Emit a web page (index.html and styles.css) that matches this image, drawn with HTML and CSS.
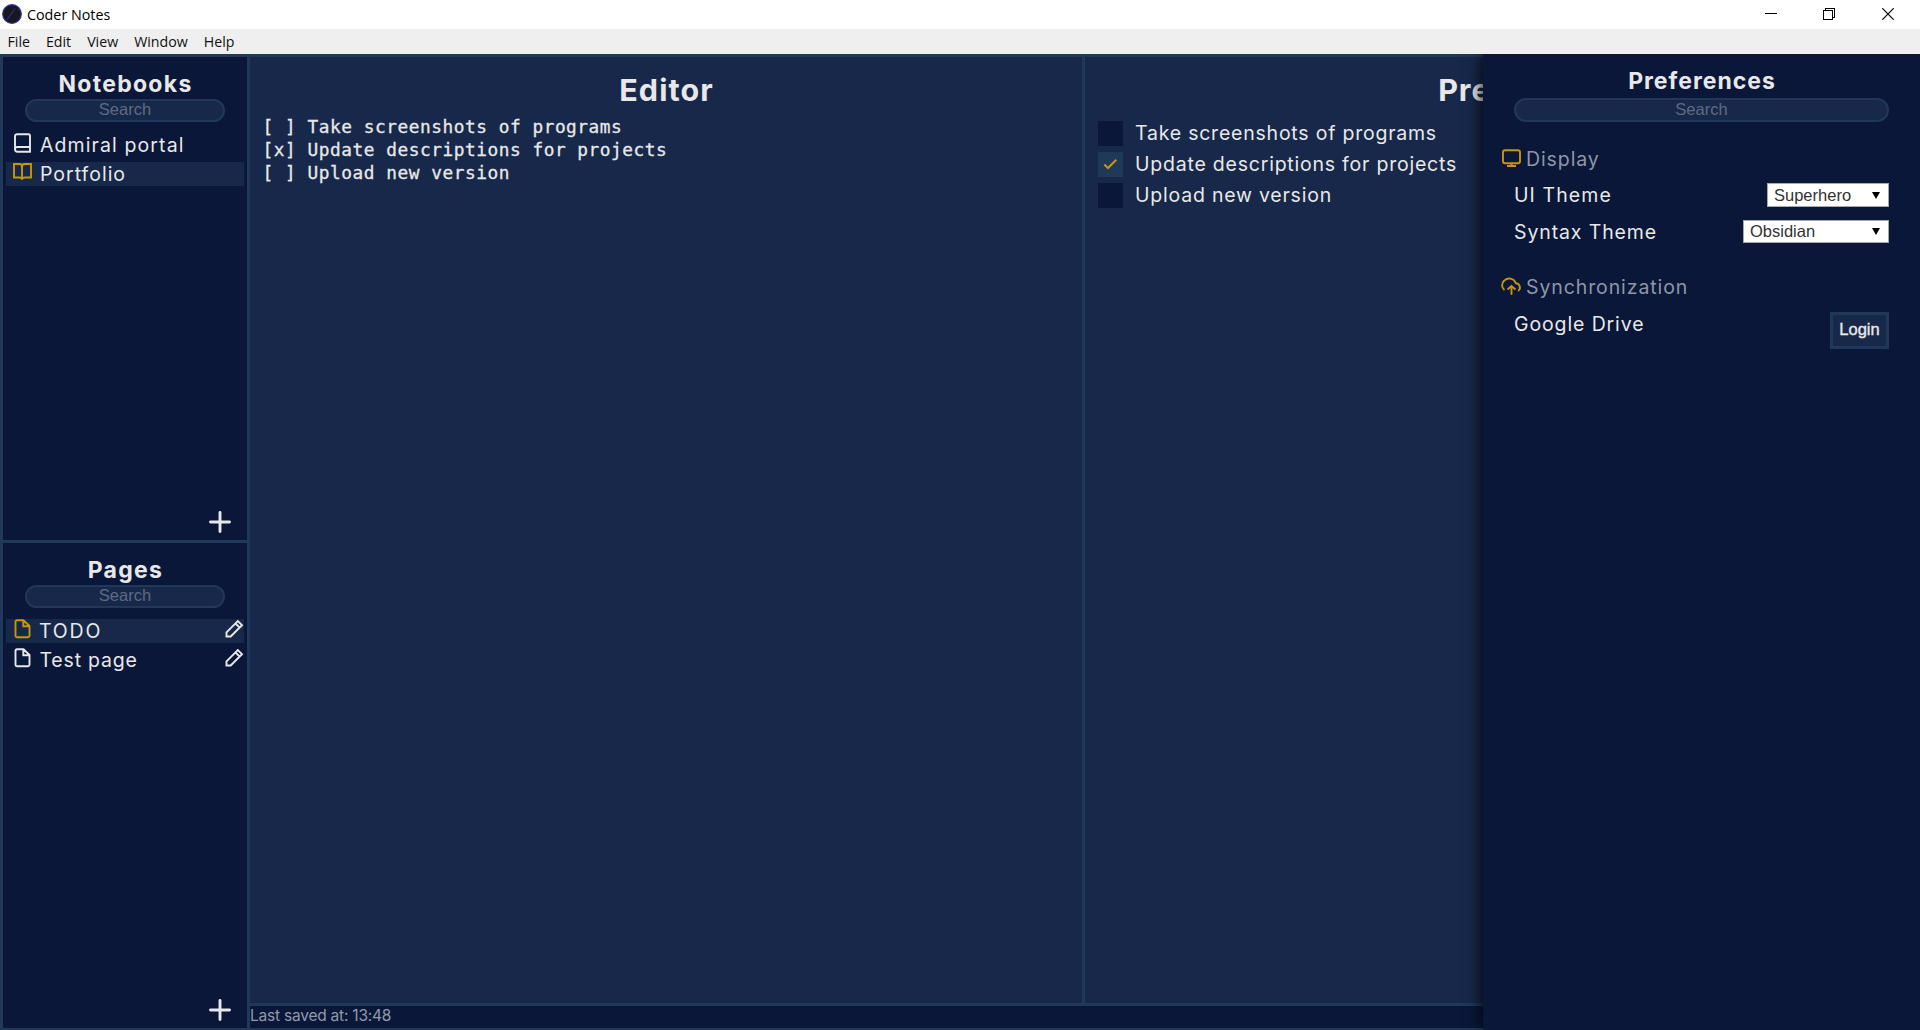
FILE: index.html
```html
<!DOCTYPE html>
<html lang="en">
<head>
<meta charset="utf-8">
<title>Coder Notes</title>
<link rel="stylesheet" href="styles.css">
</head>
<body>
<header class="titlebar">
  <svg class="logo" viewBox="0 0 20 20"><circle cx="10" cy="10" r="9.3" fill="#17171c" stroke="#3230a8" stroke-width="1.2"/><path d="M5.3 15.5 13 4.500M15.500 5.200l2 .800" stroke="#3633b4" stroke-width="1" fill="none"/></svg>
  <span class="app-name">Coder Notes</span>
  <div class="window-controls">
    <svg viewBox="0 0 12 12"><path d="M0 5.500h12" /></svg>
    <svg viewBox="0 0 12 12"><path d="M.5 2.500h9v9h-9zM2.500 2.500v-2h9v9h-2"/></svg>
    <svg class="close" viewBox="0 0 12 12"><path d="M.3.300l11.400 11.400M11.700.300.300 11.700"/></svg>
  </div>
</header>
<nav class="menubar"><span>File</span><span>Edit</span><span>View</span><span>Window</span><span>Help</span></nav>
<main class="app">
  <aside class="sidebar">
    <section class="panel">
      <h2 class="h-notebooks">Notebooks</h2>
      <div class="search">Search</div>
      <ul class="list">
        <li><svg class="icon" viewBox="0 0 20 20"><path d="M5 1.200h11.500a1.500 1.500 0 0 1 1.500 1.500V18.700H5.500A2.500 2.500 0 0 1 3 16.200V3.200A2 2 0 0 1 5 1.200zM3 16.300A2.300 2.300 0 0 1 5.500 14H18"/></svg><span class="l-admiral">Admiral portal</span></li>
        <li class="active"><svg class="icon" viewBox="0 0 20 20"><path d="M2 2h5.500q2.500 0 2.500 2.500Q10 2 12.500 2H19v13.500h-6.500q-2 0-2.500 2-.5-2-2.500-2H2zM10 4v13"/></svg><span class="l-portfolio">Portfolio</span></li>
      </ul>
      <svg class="add" viewBox="0 0 22 22"><path d="M11 1.500v19M1.500 11h19"/></svg>
    </section>
    <section class="panel">
      <h2 class="h-pages">Pages</h2>
      <div class="search">Search</div>
      <ul class="list">
        <li class="active"><svg class="icon" viewBox="0 0 20 20"><path d="M5 1.300h6.500L17.500 7v9.500a1.500 1.500 0 0 1-1.500 1.700H5a1.500 1.500 0 0 1-1.500-1.500V2.800Q3.500 1.300 5 1.300zM11.300 1.500V7.300H17.500"/></svg><span class="l-todo">TODO</span><svg class="pencil" viewBox="0 0 20 20"><path d="M2.500 17.500v-4.200L13.800 2l4.200 4.200L6.700 17.500zM11.500 4.500l4.200 4.200"/></svg></li>
        <li><svg class="icon" viewBox="0 0 20 20"><path d="M5 1.300h6.500L17.500 7v9.500a1.500 1.500 0 0 1-1.500 1.700H5a1.500 1.500 0 0 1-1.500-1.500V2.800Q3.500 1.300 5 1.300zM11.300 1.500V7.300H17.500"/></svg><span class="l-test">Test page</span><svg class="pencil" viewBox="0 0 20 20"><path d="M2.500 17.500v-4.200L13.800 2l4.200 4.200L6.700 17.500zM11.500 4.500l4.200 4.200"/></svg></li>
      </ul>
      <svg class="add" viewBox="0 0 22 22"><path d="M11 1.500v19M1.500 11h19"/></svg>
    </section>
  </aside>
  <div class="workspace">
    <section class="editor">
      <h1 class="h-editor">Editor</h1>
      <pre class="source">[ ] Take screenshots of programs
[x] Update descriptions for projects
[ ] Upload new version</pre>
    </section>
    <section class="preview">
      <h1 class="h-preview">Preview</h1>
      <ul class="tasks">
        <li><i class="box"></i><span>Take screenshots of programs</span></li>
        <li><i class="box checked"><svg viewBox="0 0 25 25"><path d="M6.300 12.500l3.700 3.500 8.300-8.300"/></svg></i><span>Update descriptions for projects</span></li>
        <li><i class="box"></i><span>Upload new version</span></li>
      </ul>
    </section>
    <footer class="status">Last saved at: 13:48</footer>
  </div>
  <aside class="drawer">
    <h2 class="h-prefs">Preferences</h2>
    <div class="search">Search</div>
    <h3><svg class="icon" viewBox="0 0 20 20"><rect x="2" y="2.200" width="17" height="13" rx="2"/><path d="M10.500 15.200V17.500M6 18h9"/></svg><span>Display</span></h3>
    <div class="setting"><span class="p-ui">UI Theme</span><div class="select select-ui"><span>Superhero</span><b></b></div></div>
    <div class="setting second"><span>Syntax Theme</span><div class="select select-syntax"><span>Obsidian</span><b></b></div></div>
    <h3 class="sync"><svg class="icon" viewBox="0 0 20 20"><path d="M3.500 14A6 6 0 0 1 3 4.800 7 7 0 0 1 14.800 7.200 4.200 4.200 0 0 1 17 14.900M10.500 18.800V10.500M6.500 13.500 10.500 10l4 3.500"/></svg><span>Synchronization</span></h3>
    <div class="setting drive"><span>Google Drive</span><button class="login">Login</button></div>
  </aside>
</main>
</body>
</html>
```
FILE: styles.css
```css
* { box-sizing: border-box; margin: 0; padding: 0; }
:root { --dark: #0a1739; --mid: #17284a; --line: #203859; --text: #e8e8e8; --gold: #c7960c; }
body { width: 1920px; height: 1030px; overflow: hidden; display: flex; flex-direction: column; background: var(--dark); color: var(--text); font-family: Inter, sans-serif; }
ul { list-style: none; }
svg { fill: none; stroke: currentColor; display: block; flex: none; }

.titlebar { height: 29px; flex: none; display: flex; align-items: center; background: #fff; color: #000; padding: 0 26px 1px 2px; font: 14.3px "Open Sans", sans-serif; }
.logo { width: 20px; height: 20px; margin-right: 5px; }
.window-controls { margin-left: auto; display: flex; gap: 47px; }
.window-controls svg { width: 12px; height: 12px; stroke-width: 1; shape-rendering: crispEdges; }
.window-controls svg:first-child { margin-right: -1px; }
.window-controls .close { shape-rendering: auto; stroke-width: 1.200; }
.menubar { height: 25px; flex: none; display: flex; align-items: center; background: #efefef; color: #111; padding-left: 7.500px; gap: 16px; font: 14.2px "Open Sans", sans-serif; }

.app { position: relative; flex: 1; min-height: 0; overflow: hidden; display: grid; grid-template-columns: 244px 1fr; gap: 3px; padding: 3px 3px 2px; background: var(--line); }
.sidebar { display: grid; grid-template-rows: 483px 485px; gap: 3px; }
.panel { background: var(--dark); display: flex; flex-direction: column; padding: 12px 3px 7px; }
h2 { font-size: 23px; line-height: 30px; font-weight: 700; text-align: center; letter-spacing: 1.3px; text-indent: 1px; }
.search { height: 23px; border: 2px solid var(--line); border-radius: 12px; background: var(--mid); color: #5f6a84; font: 16.5px/17px "Liberation Sans", sans-serif; text-align: center; }
.panel .search { margin: 0 19px; }
.list { margin-top: 11px; display: flex; flex-direction: column; gap: 5px; }
.list li { height: 24px; display: flex; align-items: center; padding: 0 0 0 6px; font-size: 19.5px; }
.l-admiral { letter-spacing: 1.1px; }
.l-portfolio { letter-spacing: 1px; }
.l-todo { letter-spacing: 1.8px; margin-left: -1px; }
.l-test { letter-spacing: .8px; margin-left: -.5px; }
.list .active { background: var(--mid); }
.active .icon { color: var(--gold); }
.icon { width: 20px; height: 20px; margin-right: 8px; stroke-width: 1.900; }
.list .icon { margin-top: -5px; }
.pencil { width: 20px; height: 20px; margin: -5px 0 0 auto; stroke-width: 1.900; }
.add { width: 22px; height: 22px; margin: auto 13px 0 auto; stroke-width: 2.900; stroke-linecap: round; }

.workspace { display: grid; grid-template: 946px 22px / 832px 832px; gap: 3px; }
.editor, .preview { background: var(--mid); padding: 12px 13px; }
h1 { font-size: 30.5px; line-height: 42px; font-weight: 700; text-align: center; letter-spacing: 1.1px; text-indent: 1px; }
.h-preview { letter-spacing: .9px; text-indent: 0; }
.source { margin: 4px 0 0 -.5px; font: 17.800px/23px "DejaVu Sans Mono", monospace; letter-spacing: .54px; -webkit-text-stroke: .3px; }
.tasks { margin-top: 10px; display: flex; flex-direction: column; gap: 6px; font-size: 19.5px; letter-spacing: .78px; }
.tasks li { display: flex; gap: 12px; height: 25px; line-height: 24px; }
.box { width: 25px; height: 25px; background: var(--dark); color: var(--gold); }
.box.checked { background: var(--line); }
.box svg { stroke-width: 2; }
.status { grid-column: 1 / 3; background: var(--dark); color: #9299aa; font-size: 15.500px; line-height: 20px; letter-spacing: -.22px; }

.drawer { position: absolute; top: 0; right: 0; bottom: 0; width: 437px; background: var(--dark); box-shadow: 0 0 16px #000; padding: 12px 31px; }
.drawer .search { height: 24px; margin-top: 2px; line-height: 19px; }
.h-prefs { letter-spacing: 1px; }
h3 { display: flex; align-items: center; margin: 24px 0 0 -13px; height: 26px; font-size: 19.5px; font-weight: 400; letter-spacing: .9px; color: #8f96a8; }
h3.sync { margin-top: 29px; }
h3 .icon { color: var(--gold); margin: -2px 5px 0 0; overflow: visible; }
.setting { display: flex; justify-content: space-between; margin-top: 11px; height: 25px; font-size: 19.5px; line-height: 24px; letter-spacing: .88px; }
.setting.second { margin-top: 12px; }
.setting.drive { margin-top: 12px; }
.p-ui { letter-spacing: 1.1px; }
.select { height: 24px; display: flex; align-items: center; justify-content: space-between; border: 1px solid #a9a9a9; background: #fff; color: #333; font: 16.5px "Liberation Sans", sans-serif; letter-spacing: 0; padding: 0 8px 0 6px; }
.select-ui { width: 122px; }
.select-syntax { width: 146px; height: 23px; }
.select b { border: 4px solid transparent; border-top: 7px solid #000; border-bottom: 0; }
.login { width: 59px; height: 37px; padding-bottom: 2px; border: 3px solid var(--line); background: var(--mid); color: var(--text); font: 16.500px "Liberation Sans", sans-serif; -webkit-text-stroke: .4px; }
```
